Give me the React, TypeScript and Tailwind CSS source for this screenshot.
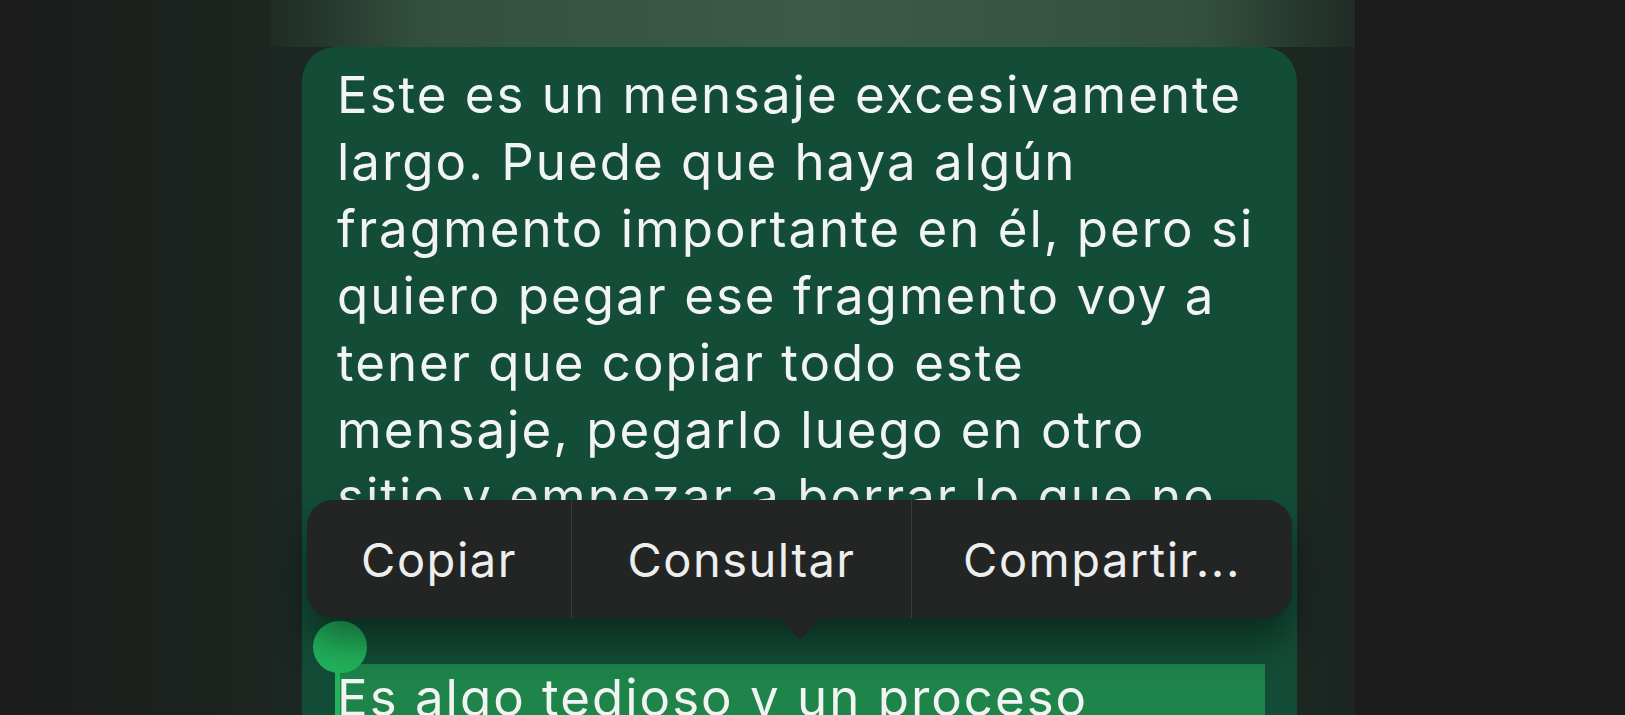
const lines = [
  'Este es un mensaje excesivamente',
  'largo. Puede que haya algún',
  'fragmento importante en él, pero si',
  'quiero pegar ese fragmento voy a',
  'tener que copiar todo este',
  'mensaje, pegarlo luego en otro',
  'sitio y empezar a borrar lo que no',
  'me interesa.',
]

const menuItems = ['Copiar', 'Consultar', 'Compartir...']

function EditMenu() {
  return (
    <div className="absolute left-[5px] top-[453px] z-10 h-[118px] w-[985px] rounded-[26px] bg-[#232524] shadow-[0_22px_40px_rgba(0,0,0,0.45)]">
      <div className="flex h-full items-stretch">
        {menuItems.map((item, i) => (
          <div
            key={item}
            className={
              i === 0
                ? 'flex w-[264px] items-center justify-center'
                : i === 1
                  ? 'flex w-[340px] items-center justify-center border-l border-[#3a3c3b]'
                  : 'flex flex-1 items-center justify-center border-l border-[#3a3c3b]'
            }
          >
            <span className="text-[47px] leading-none tracking-[1.5px] text-[#eeeeee]">{item}</span>
          </div>
        ))}
      </div>
      {/* pointer */}
      <div className="absolute left-[473px] top-[118px] h-0 w-0 border-l-[20px] border-r-[20px] border-t-[22px] border-l-transparent border-r-transparent border-t-[#232524]" />
    </div>
  )
}

export default function App() {
  return (
    <div
      className="flex h-[715px] w-[1625px] overflow-hidden bg-[#1b1c1b]"
      style={{ fontFamily: 'Inter, "Noto Sans", sans-serif' }}
    >
      <div className="w-[270px] bg-gradient-to-r from-[#1b1c1b] to-[#1c2520]" />

      <div className="flex w-[1085px] flex-col bg-gradient-to-r from-[#1c2622] via-[#1d3a2c] to-[#1c2521]">
        <div className="h-[47px] shrink-0 bg-[linear-gradient(to_right,#1f2b25_0%,#33503f_14%,#3b5a4a_50%,#33503f_86%,#1f2b25_100%)]" />

        <div className="relative ml-[32px] mr-[58px] flex-1 rounded-t-[34px] bg-[#134d37]">
          <div className="pl-[35px] pr-[32px] pt-[14px] text-[51px] leading-[67px] tracking-[2px] text-[#f1f4f2]">
            {lines.map((l) => (
              <div key={l} className="whitespace-nowrap">
                {l}
              </div>
            ))}
            <div className="h-[67px]" />
            <div className="whitespace-nowrap bg-[#1e8449]">Es algo tedioso y un proceso</div>
          </div>

          {/* selection handle */}
          <div className="absolute left-[11px] top-[574px] h-[52px] w-[54px] rounded-full bg-[#22b35c]" />
          <div className="absolute left-[33px] top-[600px] bottom-0 w-[5px] bg-[#22b35c]" />

          <EditMenu />
        </div>
      </div>

      <div className="flex-1 bg-[#1b1c1b]" />
    </div>
  )
}
